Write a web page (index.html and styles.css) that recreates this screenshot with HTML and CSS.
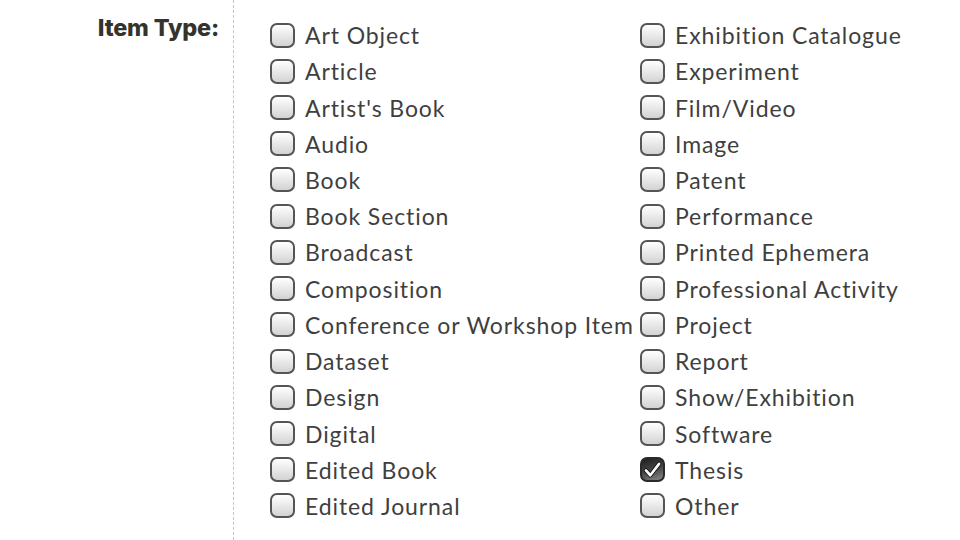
FILE: index.html
```html
<!DOCTYPE html>
<html lang="en">
<head>
    <meta charset="UTF-8">
    <meta name="viewport" content="width=device-width, initial-scale=1.0">
    <title>Item Type</title>
    <link rel="stylesheet" href="styles.css">
</head>
<body>
    <!-- Campo de tipo de item -->
    <div class="campo">
        <div class="campo-label">Item Type:</div>

        <div class="opcoes">
            <label class="opcao"><span class="caixa"></span>Art Object</label>
            <label class="opcao"><span class="caixa"></span>Exhibition Catalogue</label>
            <label class="opcao"><span class="caixa"></span>Article</label>
            <label class="opcao"><span class="caixa"></span>Experiment</label>
            <label class="opcao"><span class="caixa"></span>Artist's Book</label>
            <label class="opcao"><span class="caixa"></span>Film/Video</label>
            <label class="opcao"><span class="caixa"></span>Audio</label>
            <label class="opcao"><span class="caixa"></span>Image</label>
            <label class="opcao"><span class="caixa"></span>Book</label>
            <label class="opcao"><span class="caixa"></span>Patent</label>
            <label class="opcao"><span class="caixa"></span>Book Section</label>
            <label class="opcao"><span class="caixa"></span>Performance</label>
            <label class="opcao"><span class="caixa"></span>Broadcast</label>
            <label class="opcao"><span class="caixa"></span>Printed Ephemera</label>
            <label class="opcao"><span class="caixa"></span>Composition</label>
            <label class="opcao"><span class="caixa"></span>Professional Activity</label>
            <label class="opcao"><span class="caixa"></span>Conference or Workshop Item</label>
            <label class="opcao"><span class="caixa"></span>Project</label>
            <label class="opcao"><span class="caixa"></span>Dataset</label>
            <label class="opcao"><span class="caixa"></span>Report</label>
            <label class="opcao"><span class="caixa"></span>Design</label>
            <label class="opcao"><span class="caixa"></span>Show/Exhibition</label>
            <label class="opcao"><span class="caixa"></span>Digital</label>
            <label class="opcao"><span class="caixa"></span>Software</label>
            <label class="opcao"><span class="caixa"></span>Edited Book</label>
            <label class="opcao">
                <span class="caixa marcada">
                    <svg viewBox="0 0 24 24" width="22" height="22">
                        <path d="M4.5 12.5l5 5.5L19.5 5" fill="none" stroke="#111" stroke-width="5" stroke-linecap="round" stroke-linejoin="round"/>
                        <path d="M4.5 12.5l5 5.5L19.5 5" fill="none" stroke="#fff" stroke-width="3" stroke-linecap="round" stroke-linejoin="round"/>
                    </svg>
                </span>Thesis
            </label>
            <label class="opcao"><span class="caixa"></span>Edited Journal</label>
            <label class="opcao"><span class="caixa"></span>Other</label>
        </div>
    </div>
</body>
</html>
```

FILE: styles.css
```css
/* Estilos gerais */
body {
    margin: 0;
    background-color: #fff;
    font-family: Lato, "Liberation Sans", sans-serif;
    color: #3f3f3f;
}

/* Linha do campo */
.campo {
    display: flex;
    min-height: 540px;
}

.campo-label {
    width: 233px;
    padding-top: 13px;
    padding-right: 14px;
    box-sizing: border-box;
    text-align: right;
    font-family: Inter, "Liberation Sans", sans-serif;
    font-weight: 800;
    font-size: 23.5px;
    color: #34342c;
    letter-spacing: -0.2px;
}

/* Lista de opções em duas colunas */
.opcoes {
    border-left: 1px dashed #c3c6d0;
    padding-left: 36px;
    padding-top: 17px;
    display: grid;
    grid-template-columns: 370px 1fr;
    grid-auto-rows: 36.23px;
    align-content: start;
    flex-grow: 1;
}

.opcao {
    display: flex;
    align-items: center;
    font-size: 23px;
    letter-spacing: 0.9px;
    white-space: nowrap;
}

/* Caixa de seleção */
.caixa {
    width: 25px;
    height: 25px;
    box-sizing: border-box;
    margin-right: 10px;
    border: 2px solid #555;
    border-radius: 7px;
    background: linear-gradient(#ffffff, #d3d3d3);
    display: flex;
    align-items: center;
    justify-content: center;
    flex-shrink: 0;
}

.caixa.marcada {
    border-color: #2a2a2a;
    background: linear-gradient(160deg, #1f1f1f 0%, #444 50%, #8a8a8a 100%);
}
```
